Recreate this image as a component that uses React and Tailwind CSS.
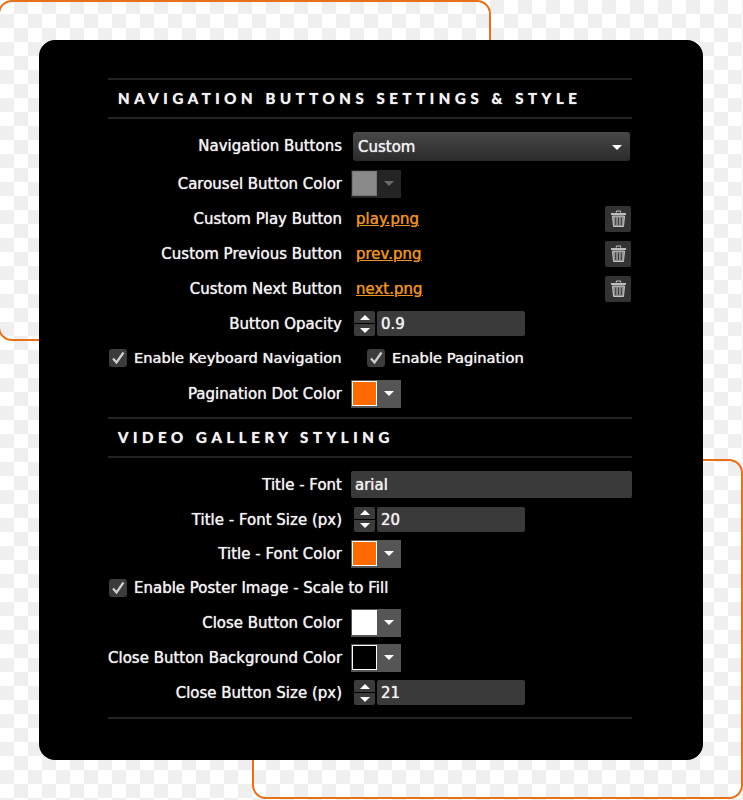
const labelFont = { fontFamily: '"DejaVu Sans", sans-serif' };

function Arrow({ color = 'border-t-white' }) {
  return <span className={`block w-0 h-0 border-x-[5px] border-x-transparent border-t-[5px] ${color}`} />;
}

function Label({ children, top = 'pt-[2px]' }) {
  return <span className={`w-[234px] shrink-0 text-right whitespace-nowrap ${top}`}>{children}</span>;
}

function Row({ label, children, className = 'h-[35px]', labelTop }) {
  return (
    <div className={`flex items-center ${className}`}>
      <Label top={labelTop}>{label}</Label>
      {children}
    </div>
  );
}

function Swatch({ color, muted }) {
  return (
    <div className={`ml-[9px] flex items-center w-[50px] h-[28px] pl-[1px] ${muted ? 'bg-[#242424]' : 'bg-[#555555]'}`}>
      <span className={`block w-[25px] h-[25px] border ${muted ? 'border-[#777777]' : 'border-white'} ${color}`} />
      <span className="flex-1 flex justify-center">
        <Arrow color={muted ? 'border-t-[#6a6a6a]' : 'border-t-white'} />
      </span>
    </div>
  );
}

function Stepper({ value }) {
  return (
    <div className="ml-[12px] flex items-center">
      <div className="flex flex-col gap-[1px] w-[21px]">
        <span className="flex items-center justify-center h-[12px] bg-[#3b3b3b] rounded-t-[2px]">
          <span className="block w-0 h-0 border-x-[5px] border-x-transparent border-b-[5px] border-b-white" />
        </span>
        <span className="flex items-center justify-center h-[12px] bg-[#3b3b3b] rounded-b-[2px]">
          <Arrow />
        </span>
      </div>
      <div className="ml-[2px] w-[148px] h-[25px] pl-[4px] pt-[2px] flex items-center bg-[#3a3a3a] rounded-[2px]">{value}</div>
    </div>
  );
}

function Trash() {
  return (
    <span className="ml-auto mr-px flex items-center justify-center w-[26px] h-[26px] bg-[#333333] rounded-[2px]">
      <svg width="17" height="18" viewBox="0 0 17 18" fill="none" stroke="#bdbdbd">
        <path d="M6 2.5 L6.8 1 H10.2 L11 2.5" strokeWidth="1.2" />
        <path d="M1 4 H16" strokeWidth="2" />
        <path d="M2.5 6 H14.5 L13.5 16.5 H3.5 Z" fill="#8e8e8e" stroke="#c4c4c4" strokeWidth="1" />
        <path d="M5.7 7.5 V15 M8.5 7.5 V15 M11.3 7.5 V15" stroke="#3a3a3a" strokeWidth="1" />
      </svg>
    </span>
  );
}

function FileRow({ label, file }) {
  return (
    <Row label={label}>
      <a className="ml-[14px] pt-[2px] text-[#e8922a] underline [text-shadow:0_0_1px_#e8922a]">{file}</a>
      <Trash />
    </Row>
  );
}

function Check({ label, className = '' }) {
  return (
    <span className={`flex items-center ${className}`}>
      <span className="flex items-center justify-center w-[18px] h-[18px] rounded-[3px] bg-[#3c3c3c]">
        <svg width="16" height="16" viewBox="0 0 16 16" fill="none" stroke="#d0d0d0" strokeWidth="2.2">
          <path d="M3 8.5 L6.5 12.5 L13.5 2.5" />
        </svg>
      </span>
      <span className="ml-[7px] whitespace-nowrap">{label}</span>
    </span>
  );
}

function Heading({ children }) {
  return (
    <div
      className="flex items-center h-[37px] pl-[10px] text-[15px] font-bold tracking-[4.6px] text-[#f2f2f2] whitespace-nowrap border-y-2 border-[#232323] box-content"
      style={{ fontFamily: 'Lato, sans-serif' }}
    >
      {children}
    </div>
  );
}

export default function App() {
  return (
    <div className="relative w-[743px] h-[800px] overflow-hidden bg-white [background-image:repeating-conic-gradient(#efefef_0_25%,#ffffff_0_50%)] [background-size:28px_28px]">
      <div className="absolute left-[-2px] top-0 w-[493px] h-[341px] border-2 border-[#e8701a] rounded-[14px]" />
      <div className="absolute left-[252px] top-[459px] w-[491px] h-[340px] border-2 border-[#e8701a] rounded-[14px]" />

      <div className="relative ml-[39px] top-[40px] w-[664px] h-[720px] bg-black rounded-[16px] pt-[38px] pl-[69px] pr-[71px]">
        <div className="text-[15px] text-[#f0f0f0] [text-shadow:0_0_1px_#ffffff]" style={labelFont}>
          <Heading>NAVIGATION BUTTONS SETTINGS &amp; STYLE</Heading>
          <Row label="Navigation Buttons" className="h-[35px] mt-[10px]" labelTop="pt-0">
            <div className="ml-[11px] flex items-center justify-between w-[277px] h-[29px] pl-[5px] pr-[8px] pt-[2px] rounded-[3px] bg-gradient-to-b from-[#484848] to-[#2b2b2b]">
              Custom
              <Arrow />
            </div>
          </Row>
          <Row label="Carousel Button Color" className="h-[35px] mt-[2px]">
            <Swatch color="bg-[#8a8a8a]" muted />
          </Row>
          <FileRow label="Custom Play Button" file="play.png" />
          <FileRow label="Custom Previous Button" file="prev.png" />
          <FileRow label="Custom Next Button" file="next.png" />
          <Row label="Button Opacity">
            <Stepper value="0.9" />
          </Row>
          <div className="flex items-center h-[35px] pl-[1px] text-[14.7px]">
            <Check label="Enable Keyboard Navigation" className="w-[258px]" />
            <Check label="Enable Pagination" />
          </div>
          <Row label="Pagination Dot Color">
            <Swatch color="bg-[#ff6a00]" />
          </Row>

          <div className="mt-[6px]">
            <Heading>VIDEO GALLERY STYLING</Heading>
          </div>
          <Row label="Title - Font" className="h-[35px] mt-[9px]">
            <div className="ml-[9px] w-[281px] h-[27px] pl-[4px] pt-[2px] flex items-center bg-[#3a3a3a] rounded-[2px]">arial</div>
          </Row>
          <Row label="Title - Font Size (px)" className="h-[34px]">
            <Stepper value="20" />
          </Row>
          <Row label="Title - Font Color">
            <Swatch color="bg-[#ff6a00]" />
          </Row>
          <div className="flex items-center h-[34px] pl-[1px]">
            <Check label="Enable Poster Image - Scale to Fill" />
          </div>
          <Row label="Close Button Color">
            <Swatch color="bg-white" />
          </Row>
          <Row label="Close Button Background Color">
            <Swatch color="bg-black" />
          </Row>
          <Row label="Close Button Size (px)">
            <Stepper value="21" />
          </Row>
          <div className="mt-[7px] h-[2px] bg-[#232323]" />
        </div>
      </div>
    </div>
  );
}
